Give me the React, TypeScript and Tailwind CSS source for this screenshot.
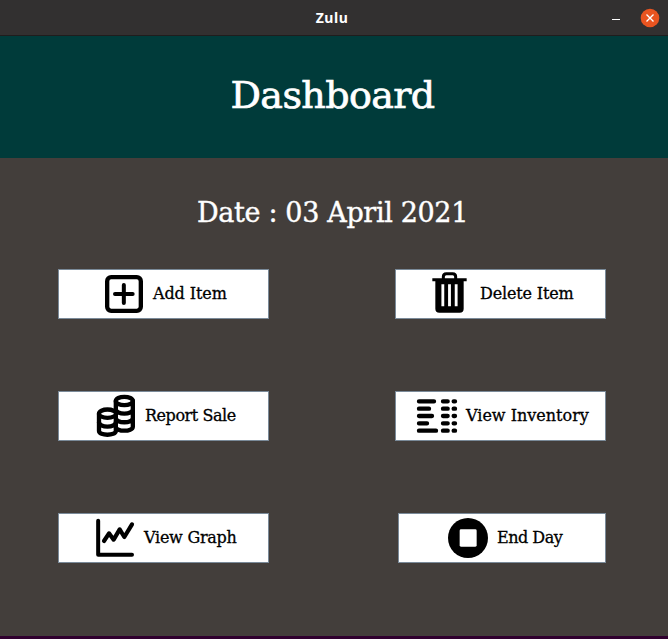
import type { ReactNode } from "react";

type ActionProps = {
  label: string;
  className: string;
  viewBox: string;
  textClass: string;
  children: ReactNode;
};

function Action({ label, className, viewBox, textClass, children }: ActionProps) {
  return (
    <button type="button" className={`flex h-[50px] items-center border border-[#7a8a99] bg-white text-black ${className}`}>
      <svg className="h-12 w-[42px] shrink-0" viewBox={viewBox} fill="none" stroke="black" strokeLinecap="round" strokeLinejoin="round">
        {children}
      </svg>
      <span className={`whitespace-nowrap text-[16px] leading-[48px] [-webkit-text-stroke:0.3px_currentColor] ${textClass}`}>{label}</span>
    </button>
  );
}

const dashes = [
  [58, 147],
  [80, 132],
  [102, 141],
  [124, 126],
  [146, 153],
];

export default function App() {
  return (
    <div className="flex h-[639px] w-[668px] flex-col overflow-hidden bg-[#433e3b] font-['DejaVu_Serif',serif] text-white">
      <header className="grid h-9 shrink-0 grid-cols-[1fr_auto_1fr] items-center border-b border-[#1f1d1d] bg-[#323030]">
        <span />
        <span className="mr-1 font-['Noto_Sans',sans-serif] text-[14px] leading-5 font-bold tracking-[0.5px]">Zulu</span>
        <div className="flex items-center justify-end gap-5 pr-2">
          <span className="mt-[3px] h-px w-2 bg-white" />
          <svg className="size-5" viewBox="0 0 20 20">
            <circle cx="10" cy="10" r="9.3" fill="#e95420" />
            <path d="M6.500 6.500 13.500 13.500M13.500 6.500 6.500 13.500" stroke="white" strokeWidth="1.4" />
          </svg>
        </div>
      </header>

      <section className="flex h-[122px] shrink-0 items-start justify-center bg-[#003b3a] pt-[33px] pr-[3px]">
        <h1 className="text-[38px] leading-[52px] tracking-[-0.6px] [-webkit-text-stroke:0.7px_currentColor]">Dashboard</h1>
      </section>

      <main className="flex h-[478px] shrink-0 flex-col">
        <h2 className="mt-[34px] pr-[3px] text-center text-[27px] leading-[42px] tracking-[-0.35px] [-webkit-text-stroke:0.4px_currentColor]">Date : 03 April 2021</h2>
        <div className="mt-[35px] flex flex-col gap-[72px] pr-[62px] pl-[58px]">
          <div className="flex justify-between">
            <Action label="Add Item" className="w-[211px] pl-[44px]" viewBox="159 30 126 144" textClass="pl-2 tracking-[-0.1px]">
              <rect x="171.5" y="51.5" width="101" height="101" rx="12" strokeWidth="13" />
              <path d="M221.5 75V129M195 102H248" strokeWidth="12" />
            </Action>
            <Action label="Delete Item" className="w-[211px] pl-[33px]" viewBox="132 30 126 144" textClass="pl-[9px] tracking-[-0.15px]">
              <path d="M175 57V50Q175 41 184 41H203Q212 41 212 50V57" strokeWidth="9" />
              <path d="M142 55H245V64H236V146Q236 158 224 158H163Q151 158 151 146V64H142Z" fill="black" stroke="none" />
              <path d="M173.5 73V139M193.5 73V139M213.5 73V139" stroke="white" strokeWidth="8.5" strokeLinecap="butt" />
            </Action>
          </div>
          <div className="flex justify-between">
            <Action label="Report Sale" className="w-[211px] pl-[36px]" viewBox="135 30 126 144" textClass="pl-2 tracking-[-0.45px]">
              <g strokeWidth="13">
                <ellipse cx="223" cy="57" rx="25.5" ry="12.5" />
                <path d="M197.500 57V134C197.500 150 248.500 150 248.500 134V57M197.500 82C197.500 99 248.500 99 248.500 82M197.500 108C197.500 125 248.500 125 248.500 108" />
                <path d="M147 95V147C147 162 197.500 162 197.500 147V95" fill="white" />
                <ellipse cx="172.500" cy="95" rx="25.5" ry="12.5" fill="white" />
                <path d="M147 121C147 138 197.500 138 197.500 121" />
              </g>
            </Action>
            <Action label="View Inventory" className="w-[211px] pl-[20px]" viewBox="93 30 126 144" textClass="pl-2">
              <g strokeWidth="13">
                {dashes.map(([y, end]) => (
                  <path key={y} d={`M102 ${y}H${end}M174 ${y}H188M206 ${y}H210`} />
                ))}
              </g>
            </Action>
          </div>
          <div className="flex justify-between">
            <Action label="View Graph" className="w-[211px] pl-[35px]" viewBox="132 30 126 144" textClass="pl-2 tracking-[-0.25px]">
              <path d="M144.5 50V152H246" strokeWidth="12" />
              <path d="M162 111 177 88 191 107 209 76 223 99 246 61" strokeWidth="12.5" />
            </Action>
            <Action label="End Day" className="w-[208px] pl-[48px]" viewBox="186 30 126 144" textClass="pl-2 tracking-[-0.5px]">
              <circle cx="249" cy="102" r="60" fill="black" stroke="none" />
              <rect x="224" y="76" width="51" height="52" rx="4" fill="white" stroke="none" />
            </Action>
          </div>
        </div>
      </main>
      <footer className="h-[3px] shrink-0 bg-[#30002f]" />
    </div>
  );
}
